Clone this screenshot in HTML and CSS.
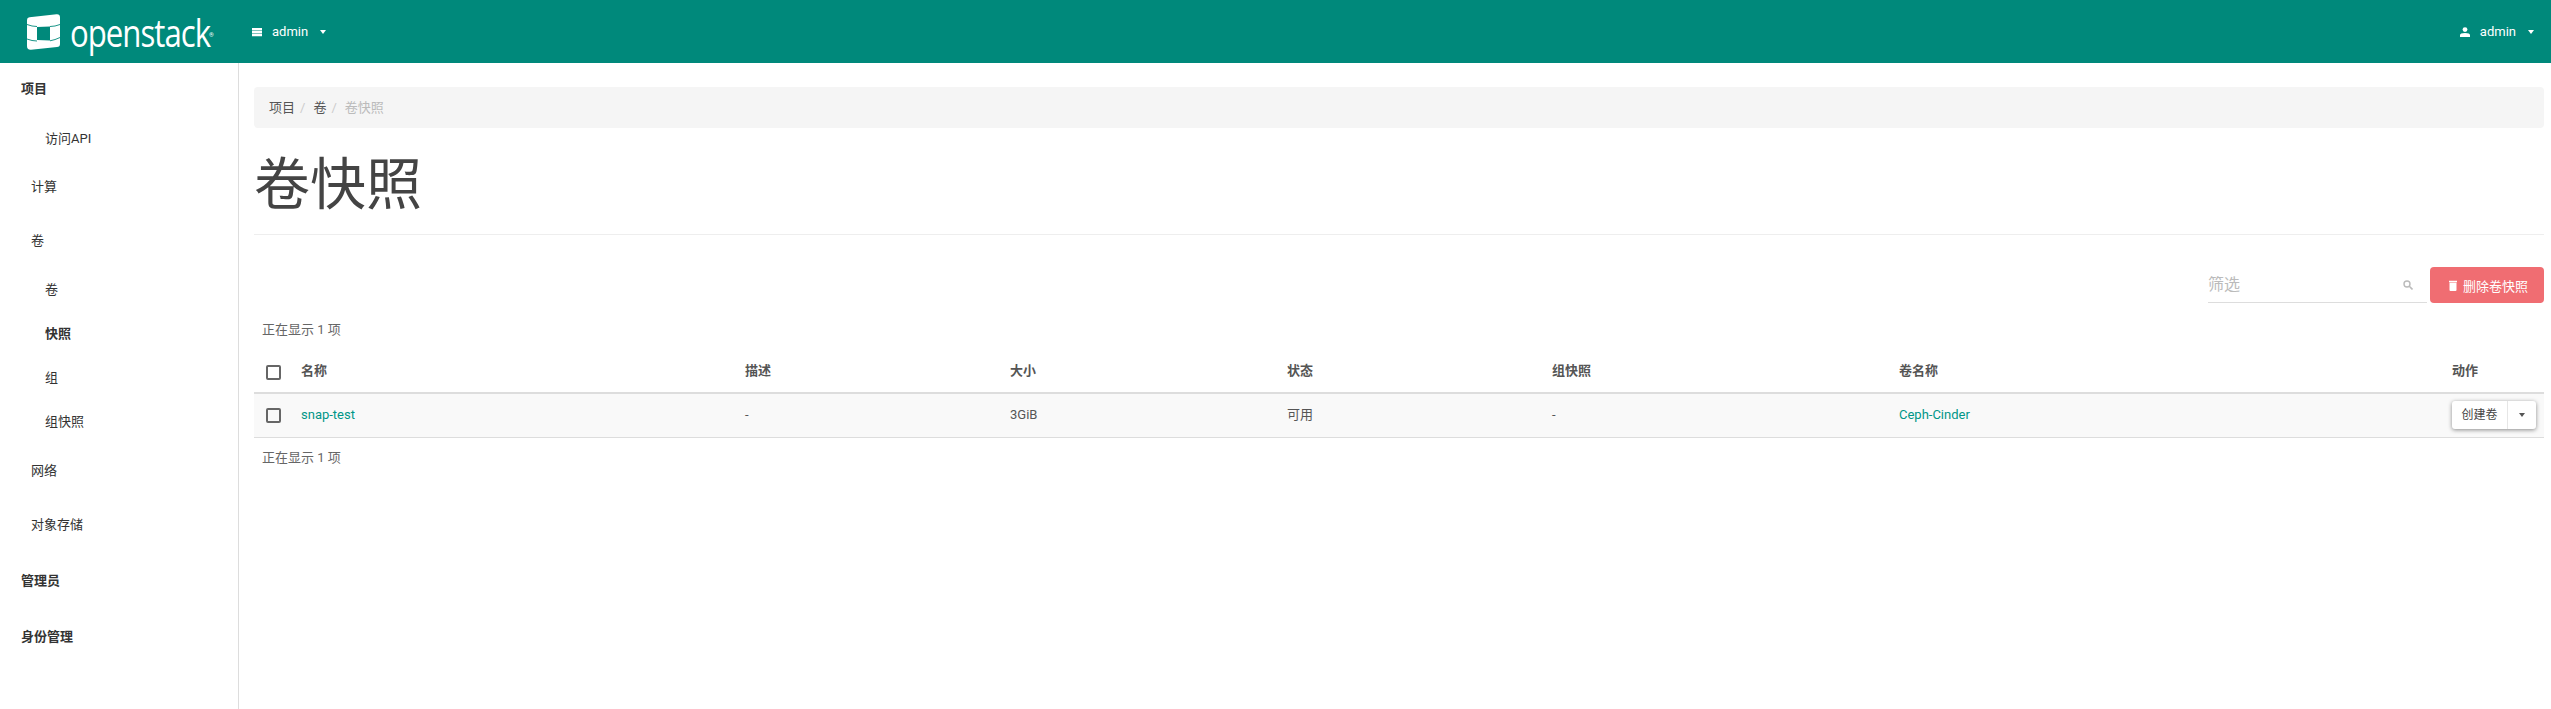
FILE: index.html
```html
<!DOCTYPE html>
<html lang="zh">
<head>
    <meta charset="UTF-8">
    <meta name="viewport" content="width=device-width, initial-scale=1.0">
    <title>卷快照</title>
    <link rel="stylesheet" href="styles.css">
</head>
<body>
    <header class="navbar">
        <a class="brand">
            <svg class="brand-logo" viewBox="0 0 33 36" width="33" height="36">
                <path fill="#fff" fill-rule="evenodd" d="M2.500 3.200 L29.500 0.300 Q33 0 33 3.500 V30 Q33 32.800 30 33.100 L4 35.700 Q0 36 0 32 V6 Q0 3.500 2.500 3.200 Z M10 13 V26 L23 26.500 V12.500 Z"/>
                <path fill="none" stroke="#00897b" stroke-width="0.900" d="M0 10.500 Q5 12.500 10 12.500 M23 12.500 Q28 12.500 33 10.500 M0 25 Q5 27 10 27 M23 26.800 Q28 26 33 23.500"/>
            </svg>
            <span class="brand-text">openstack</span><span class="brand-reg">®</span>
        </a>
        <a class="nav-link nav-project">
            <svg class="nav-icon" viewBox="0 0 10 10" width="10" height="10"><path fill="#fff" d="M0 1h10v2.300H0zM0 3.800h10v2.400H0zM0 6.800h10v2.400H0z"/></svg>
            <span>admin</span><span class="caret"></span>
        </a>
        <a class="nav-link nav-user">
            <svg class="nav-icon" viewBox="0 0 10 10" width="10" height="10"><circle fill="#fff" cx="5" cy="2.600" r="2.400"/><path fill="#fff" d="M0 10V8q0-2 5-2t5 2v2z"/></svg>
            <span>admin</span><span class="caret"></span>
        </a>
    </header>

    <div class="page">
        <nav class="sidebar">
            <a class="side-head side-first">项目</a>
            <a class="side-sub side-api">访问API</a>
            <a class="side-item side-compute">计算</a>
            <a class="side-item side-volumes">卷</a>
            <a class="side-sub side-sub-first">卷</a>
            <a class="side-sub side-active">快照</a>
            <a class="side-sub">组</a>
            <a class="side-sub">组快照</a>
            <a class="side-item side-network">网络</a>
            <a class="side-item">对象存储</a>
            <a class="side-head">管理员</a>
            <a class="side-head">身份管理</a>
        </nav>

        <main class="content">
            <ol class="breadcrumb">
                <li>项目</li>
                <li class="crumb-sep">/</li>
                <li>卷</li>
                <li class="crumb-sep">/</li>
                <li class="crumb-current">卷快照</li>
            </ol>

            <h1 class="page-title">卷快照</h1>

            <div class="toolbar">
                <div class="filter">
                    <span class="filter-hint">筛选</span>
                    <svg class="filter-icon" viewBox="0 0 10 10" width="10" height="10"><circle cx="4" cy="4" r="3" fill="none" stroke="#bbb" stroke-width="1.400"/><path d="M6.300 6.300 9.500 9.500" stroke="#bbb" stroke-width="1.600"/></svg>
                </div>
                <button class="btn-delete">
                    <svg viewBox="0 0 10 11" width="10" height="11"><path fill="#fff" d="M1 0.800h8v1.400H1zM1.500 2.800h7v7.200q0 1-1 1h-5q-1 0-1-1z"/></svg>
                    删除卷快照
                </button>
            </div>

            <div class="count">正在显示 1 项</div>

            <table class="table">
                <thead>
                    <tr>
                        <th class="col-check"><span class="checkbox checkbox-head"></span></th>
                        <th class="col-name">名称</th>
                        <th class="col-desc">描述</th>
                        <th class="col-size">大小</th>
                        <th class="col-status">状态</th>
                        <th class="col-group">组快照</th>
                        <th class="col-volume">卷名称</th>
                        <th class="col-actions">动作</th>
                    </tr>
                </thead>
                <tbody>
                    <tr>
                        <td><span class="checkbox"></span></td>
                        <td><a class="link">snap-test</a></td>
                        <td>-</td>
                        <td>3GiB</td>
                        <td>可用</td>
                        <td>-</td>
                        <td><a class="link">Ceph-Cinder</a></td>
                        <td>
                            <div class="btn-group">
                                <span class="btn-main">创建卷</span>
                                <span class="btn-toggle"><span class="caret caret-dark"></span></span>
                            </div>
                        </td>
                    </tr>
                </tbody>
            </table>

            <div class="count count-bottom">正在显示 1 项</div>
        </main>
    </div>
</body>
</html>
```

FILE: styles.css
```css
* {
    box-sizing: border-box;
}

body {
    margin: 0;
    height: 709px;
    overflow: hidden;
    background: white;
    color: #333;
    font-family: Roboto, "Noto Sans CJK SC", sans-serif;
    font-size: 13px;
    line-height: 20px;
}

.navbar {
    display: flex;
    align-items: center;
    height: 63px;
    background-color: #00897b;
    color: white;
}

.brand {
    display: flex;
    align-items: center;
    width: 252px;
    padding-left: 27px;
}

.brand-logo {
    flex: none;
}

.brand-text {
    display: block;
    width: 139px;
    margin-left: 10px;
    font-family: "Open Sans", sans-serif;
    font-size: 38px;
    line-height: 40px;
    letter-spacing: -1.2px;
    white-space: nowrap;
    transform: scaleX(0.82);
    transform-origin: left center;
}

.brand-reg {
    align-self: flex-start;
    margin-top: 19px;
    font-size: 6px;
    line-height: 8px;
}

.nav-link {
    display: flex;
    align-items: center;
}

.nav-icon {
    margin-right: 10px;
}

.nav-user {
    margin-left: auto;
    margin-right: 17px;
}

.caret {
    display: inline-block;
    margin-left: 12px;
    border-top: 4px solid white;
    border-left: 3px solid transparent;
    border-right: 3px solid transparent;
}

.caret-dark {
    margin-left: 0;
    border-top-color: #555;
}

.page {
    display: flex;
    height: 646px;
}

.sidebar {
    display: flex;
    flex-direction: column;
    flex: none;
    width: 239px;
    border-right: 1px solid #ddd;
    color: #333;
}

.side-head {
    margin-top: 36px;
    padding-left: 21px;
    font-weight: 700;
}

.side-first {
    margin-top: 16px;
}

.side-item {
    margin-top: 34px;
    padding-left: 31px;
}

.side-sub {
    margin-top: 24px;
    padding-left: 45px;
}

.side-api {
    margin-top: 30px;
}

.side-compute {
    margin-top: 28px;
}

.side-sub-first,
.side-network {
    margin-top: 29px;
}

.side-active {
    font-weight: 700;
}

.content {
    flex: 1;
    padding: 24px 7px 0 15px;
    min-width: 0;
}

.breadcrumb {
    display: flex;
    align-items: center;
    gap: 5px;
    height: 41px;
    margin: 0;
    padding: 0 15px;
    list-style: none;
    background-color: #f5f5f5;
    border-radius: 4px;
    color: #555;
}

.crumb-sep {
    color: #ccc;
    margin-right: 3px;
}

.crumb-current {
    color: #bbb;
}

.page-title {
    margin: 21px 0 0;
    height: 86px;
    border-bottom: 1px solid #eee;
    color: #444;
    font-size: 56px;
    font-weight: 400;
    line-height: 72px;
}

.toolbar {
    display: flex;
    justify-content: flex-end;
    margin-top: 32px;
}

.filter {
    display: flex;
    align-items: center;
    justify-content: space-between;
    width: 219px;
    height: 36px;
    margin-right: 3px;
    padding-right: 14px;
    border-bottom: 1px solid #ddd;
}

.filter-hint {
    color: #bbb;
    font-size: 16px;
}

.btn-delete {
    display: flex;
    align-items: center;
    justify-content: center;
    gap: 5px;
    width: 114px;
    height: 36px;
    padding: 0 0 0 2px;
    border: none;
    border-radius: 4px;
    background-color: #f06d72;
    color: white;
    font-family: inherit;
    font-size: 13px;
}

.count {
    margin-top: 17px;
    padding-left: 8px;
    color: #666;
}

.count-bottom {
    margin-top: 10px;
}

.table {
    width: 2290px;
    margin-top: 15px;
    border-collapse: collapse;
    table-layout: fixed;
}

.table th {
    height: 38px;
    padding: 0 0 6px;
    border-bottom: 2px solid #ddd;
    color: #555;
    font-weight: 700;
    text-align: left;
}

.table td {
    height: 44px;
    padding: 0;
    border-bottom: 1px solid #ddd;
    background-color: #f9f9f9;
    color: #555;
}

.col-check {
    width: 47px;
}

.col-name {
    width: 444px;
}

.col-desc {
    width: 265px;
}

.col-size {
    width: 277px;
}

.col-status {
    width: 265px;
}

.col-group {
    width: 347px;
}

.col-volume {
    width: 553px;
}

.col-actions {
    width: 92px;
}

.checkbox {
    display: block;
    width: 15px;
    height: 15px;
    margin-left: 12px;
    border: 2px solid #666;
    border-radius: 2px;
}

.checkbox-head {
    margin-top: 3px;
}

.link {
    color: #009688;
}

.btn-group {
    display: flex;
    width: 84px;
    height: 28px;
    background: white;
    border-radius: 3px;
    box-shadow: 0 1px 4px rgba(0, 0, 0, 0.45);
    color: #444;
    font-size: 12px;
    line-height: 28px;
}

.btn-main {
    width: 56px;
    text-align: center;
    border-right: 1px solid #e6e6e6;
}

.btn-toggle {
    display: flex;
    align-items: center;
    justify-content: center;
    flex: 1;
}
```
